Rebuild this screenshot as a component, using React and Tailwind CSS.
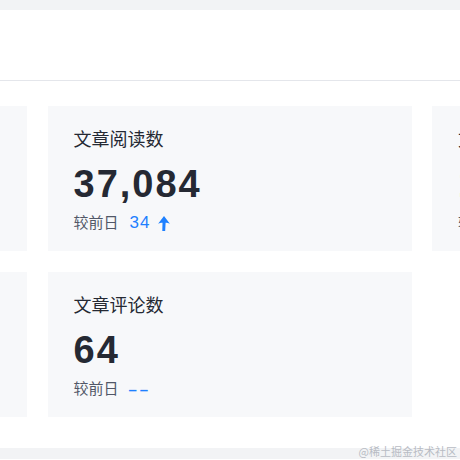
import React from "react";

const FONT = "font-['Liberation_Sans','Noto_Sans_CJK_SC',sans-serif]";

function UpArrow() {
  return (
    <svg width="12" height="15" viewBox="0 0 11 14" className="ml-[8px]">
      <path
        d="M5.5 0 L11 7.2 Q8.6 6 7 6.3 L6.6 14 L3.9 14 L4.1 6.3 Q2.4 6 0 7.2 Z"
        fill="#1e80ff"
      />
    </svg>
  );
}

function Card({ title, value, delta, up }) {
  return (
    <div className="h-[145px] bg-[#f7f8fa] pl-[26px] pt-[21px]">
      <div className="text-[18px] leading-[26px] text-[#252933]">{title}</div>
      <div className="mt-[9px] text-[38px] leading-[44px] font-bold tracking-[2px] text-[#252933]">
        {value}
      </div>
      <div className="mt-[6px] flex items-center h-[22px]">
        <span className="text-[15px] leading-[22px] text-[#515767]">较前日</span>
        {delta === null ? (
          <span className="ml-[10px] text-[15px] leading-[22px] font-bold tracking-[3px] text-[#1e80ff] relative top-[1px]">
            ––
          </span>
        ) : (
          <>
            <span className="ml-[11px] text-[17px] leading-[22px] tracking-[1px] text-[#1e80ff]">
              {delta}
            </span>
            {up && <UpArrow />}
          </>
        )}
      </div>
    </div>
  );
}

export default function App() {
  return (
    <div className={`relative w-[460px] h-[460px] overflow-hidden bg-white ${FONT}`}>
      <div className="h-[10px] bg-[#f2f3f5]" />
      <div className="h-[71px] border-b border-[#e4e6eb] bg-white" />
      <div className="pt-[25px]">
        <div className="ml-[-337px] grid grid-cols-[364px_364px_364px] gap-x-[20.5px] gap-y-[21px]">
          <Card title="文章展现数" value="12,356" delta="21" up />
          <Card title="文章阅读数" value="37,084" delta="34" up />
          <Card title="文章点赞数" value="1,203" delta="5" up />
          <Card title="文章收藏数" value="856" delta={null} />
          <Card title="文章评论数" value="64" delta={null} />
          <div className="h-[145px]" />
        </div>
      </div>
      <div className="mt-[31px] h-[11px] bg-[#f2f3f5]" />
      <div className="absolute right-[3px] bottom-[3px] text-[11px] leading-[12px] text-[#b8bcc4] font-['Noto_Sans_CJK_SC',sans-serif]">
        @稀土掘金技术社区
      </div>
    </div>
  );
}
